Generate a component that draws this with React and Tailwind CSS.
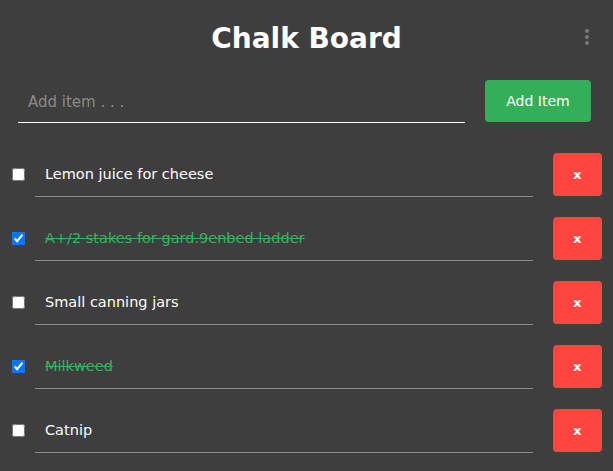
import React, { useState } from 'react';

const initialItems = [
  { id: 1, text: 'Lemon juice for cheese', done: false },
  { id: 2, text: 'A+/2 stakes for gard.9enbed ladder', done: true },
  { id: 3, text: 'Small canning jars', done: false },
  { id: 4, text: 'Milkweed', done: true },
  { id: 5, text: 'Catnip', done: false },
];

const App = () => {
  const [items, setItems] = useState(initialItems);
  const [draft, setDraft] = useState('');

  const toggle = (id) =>
    setItems(items.map(i => (i.id === id ? { ...i, done: !i.done } : i)));

  const remove = (id) => setItems(items.filter(i => i.id !== id));

  const add = () => {
    if (!draft.trim()) return;
    setItems([...items, { id: Date.now(), text: draft, done: false }]);
    setDraft('');
  };

  return (
    <div className="min-h-screen w-full bg-[#3e3e3e] font-['DejaVu_Sans',sans-serif] text-white">
      {/* header */}
      <div className="relative flex h-[78px] items-center justify-center">
        <h1 className="text-[28px] font-bold">Chalk Board</h1>
        <div className="absolute right-[24px] top-[29px] flex flex-col gap-[2px]">
          <span className="h-[4px] w-[4px] rounded-full bg-[#7a7a7a]" />
          <span className="h-[4px] w-[4px] rounded-full bg-[#7a7a7a]" />
          <span className="h-[4px] w-[4px] rounded-full bg-[#7a7a7a]" />
        </div>
      </div>

      {/* add item */}
      <div className="mt-[2px] flex items-center pl-[18px] pr-[22px]">
        <input
          value={draft}
          onChange={(e) => setDraft(e.target.value)}
          placeholder="Add item . . ."
          className="h-[43px] w-[447px] border-b border-white bg-transparent px-[10px] pt-[2px] text-[15px] text-white outline-none placeholder:text-[#8a8a8a]"
        />
        <button
          onClick={add}
          className="ml-auto mt-[-1px] h-[42px] w-[106px] rounded-[4px] bg-[#33af5a] text-[14px] text-white"
        >
          Add Item
        </button>
      </div>

      {/* list */}
      <ul className="mt-[30px] flex flex-col gap-[21px]">
        {items.map(item => (
          <li key={item.id} className="flex h-[43px] items-center pl-[12px] pr-[11px]">
            <input
              type="checkbox"
              checked={item.done}
              onChange={() => toggle(item.id)}
              className="m-0 h-[13px] w-[13px] accent-[#0b75ff]"
            />
            <div className="ml-[10px] flex h-[44px] w-[498px] items-center border-b border-[#8c8c8c] px-[10px] pt-[2px]">
              <span
                className={
                  item.done
                    ? 'text-[14.5px] text-[#34b35c] line-through'
                    : 'text-[14.5px] text-white'
                }
              >
                {item.text}
              </span>
            </div>
            <button
              onClick={() => remove(item.id)}
              className="ml-auto h-[43px] w-[49px] rounded-[4px] bg-[#ff4540] text-[13px] font-bold text-white"
            >
              x
            </button>
          </li>
        ))}
      </ul>
    </div>
  );
};

export default App;
